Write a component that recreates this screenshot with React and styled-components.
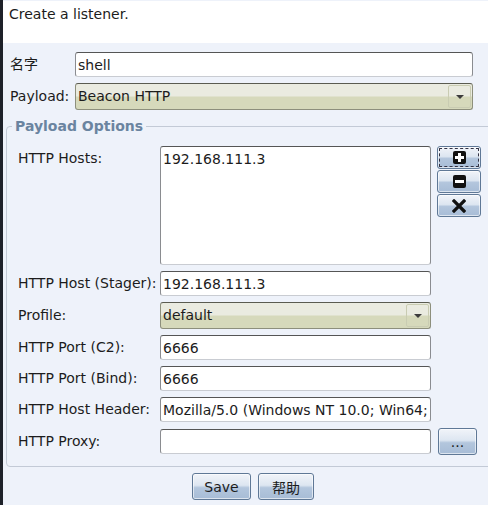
import React from 'react';
import styled, {createGlobalStyle} from 'styled-components';

const GlobalStyle = createGlobalStyle`
  html, body {
    margin: 0;
    padding: 0;
    overflow: hidden;
    background: #1e2129;
  }
  body {
    font-family: "DejaVu Sans", "Noto Sans CJK SC", sans-serif;
    font-size: 14px;
    color: #1c1c1c;
  }
`;

const ScWindow = styled.div`
  margin-left: 3px;
  width: 497px;
  height: 505px;
  background: #eef2fa;
  display: flex;
  flex-direction: column;
`;

const ScHeader = styled.div`
  height: 43px;
  box-sizing: border-box;
  background: #fff;
  border-top: 1px solid #eef2fa;
  padding: 5px 0 0 6px;
  line-height: 17px;
`;

const ScBody = styled.div`
  padding: 9px 0 0 3px;
  display: flex;
  flex-direction: column;
`;

const ScTopGrid = styled.div`
  display: grid;
  grid-template-columns: 65px 398px;
  row-gap: 6px;
  padding-left: 4px;
  align-items: center;
`;

const ScLabel = styled.label`
  line-height: 17px;
  white-space: nowrap;
  align-self: ${(p) => (p.$top ? 'start' : 'center')};
  padding-top: ${(p) => (p.$top ? '4px' : '0')};
`;

const ScInput = styled.input`
  box-sizing: border-box;
  height: 25px;
  width: 100%;
  margin: 0;
  padding: 0 2px;
  font: inherit;
  color: #1c1c1c;
  background: #fff;
  border: 1px solid #8a8c90;
  border-top-color: #555;
  border-bottom-color: #c9ccd2;
  border-radius: 3px;
  outline: none;
`;

const ScSelect = styled.div`
  box-sizing: border-box;
  height: 27px;
  width: 100%;
  display: flex;
  align-items: stretch;
  border: 1px solid #8d8f7c;
  border-top-color: #5a5b50;
  border-radius: 3px;
  background: linear-gradient(#eaebe0 0%, #eaebe0 48%, #d6d9bb 52%, #d6d9bb 100%);
  overflow: hidden;
`;

const ScSelectText = styled.span`
  flex: 1;
  padding-left: 2px;
  line-height: 25px;
`;

const ScSelectArrow = styled.span`
  width: 21px;
  margin: 1px 1px 1px 0;
  display: flex;
  align-items: center;
  justify-content: center;
  border: 1px solid #c9ccb2;
  border-radius: 2px;
  &::after {
    content: '';
    border-left: 4px solid transparent;
    border-right: 4px solid transparent;
    border-top: 4px solid #3c3c3c;
    margin-top: 1px;
  }
`;

const ScGroup = styled.fieldset`
  margin: 8px 0 0 0;
  padding: 12px 0 11px 11px;
  border: 1px solid #c3cad6;
  border-radius: 4px;
  min-width: 0;
`;

const ScLegend = styled.legend`
  margin-left: -6px;
  padding: 0 3px;
  line-height: 16px;
  font-weight: bold;
  color: #6a84a0;
`;

const ScGrid = styled.div`
  display: grid;
  grid-template-columns: 142px 271px auto;
  row-gap: 6px;
  align-items: center;
`;

const ScList = styled.div`
  box-sizing: border-box;
  height: 119px;
  background: #fff;
  border: 1px solid #8a8c90;
  border-top-color: #555;
  border-bottom-color: #c9ccd2;
  border-radius: 3px;
  padding: 4px 2px;
  line-height: 17px;
`;

const ScSide = styled.div`
  align-self: ${(p) => (p.$top ? 'start' : 'center')};
  padding-left: ${(p) => p.$pad || 6}px;
  display: flex;
  flex-direction: column;
  gap: 1px;
`;

const ScButton = styled.button`
  box-sizing: border-box;
  width: ${(p) => p.$w || 44}px;
  height: ${(p) => p.$h || 27}px;
  margin: 0;
  padding: 0;
  font-family: "DejaVu Sans", "Noto Sans CJK SC", sans-serif;
  font-size: 14px;
  color: #1c1c1c;
  display: flex;
  align-items: center;
  justify-content: center;
  border: 1px solid #5f7896;
  border-radius: 3px;
  background: linear-gradient(#f1f4f9 0%, #dde6f1 45%, #b3c6dd 55%, #a7bcd6 100%);
  box-shadow: inset 0 0 0 1px rgba(255, 255, 255, 0.6);
  outline: ${(p) => (p.$focus ? '1px dashed #334' : 'none')};
  outline-offset: -3px;
`;

const ScFooter = styled.div`
  display: flex;
  justify-content: center;
  gap: 7px;
  margin-top: 6px;
`;

const PlusIcon = () => (
  <svg width="13" height="13" viewBox="0 0 13 13">
    <rect x="0" y="0" width="13" height="13" rx="2" fill="#111" />
    <rect x="5" y="2" width="3" height="9" fill="#fff" />
    <rect x="2" y="5" width="9" height="3" fill="#fff" />
  </svg>
);

const MinusIcon = () => (
  <svg width="13" height="13" viewBox="0 0 13 13">
    <rect x="0" y="0" width="13" height="13" rx="2" fill="#111" />
    <rect x="2" y="5" width="9" height="3" fill="#fff" />
  </svg>
);

const CrossIcon = () => (
  <svg width="14" height="14" viewBox="0 0 14 14">
    <path d="M2 2 L12 12 M12 2 L2 12" stroke="#111" strokeWidth="3.2" strokeLinecap="square" />
  </svg>
);

const Field = ({value}) => <ScInput readOnly value={value} />;

const Select = ({value}) => (
  <ScSelect>
    <ScSelectText>{value}</ScSelectText>
    <ScSelectArrow />
  </ScSelect>
);

const App = () => {
  return (
    <ScWindow>
      <GlobalStyle />
      <ScHeader>Create a listener.</ScHeader>
      <ScBody>
        <ScTopGrid>
          <ScLabel>名字</ScLabel>
          <Field value="shell" />
          <ScLabel>Payload:</ScLabel>
          <Select value="Beacon HTTP" />
        </ScTopGrid>

        <ScGroup>
          <ScLegend>Payload Options</ScLegend>
          <ScGrid>
            <ScLabel $top>HTTP Hosts:</ScLabel>
            <ScList>192.168.111.3</ScList>
            <ScSide $top>
              <ScButton $h={23} $focus>
                <PlusIcon />
              </ScButton>
              <ScButton $h={23}>
                <MinusIcon />
              </ScButton>
              <ScButton $h={23}>
                <CrossIcon />
              </ScButton>
            </ScSide>

            <ScLabel>HTTP Host (Stager):</ScLabel>
            <Field value="192.168.111.3" />
            <span />

            <ScLabel>Profile:</ScLabel>
            <Select value="default" />
            <span />

            <ScLabel>HTTP Port (C2):</ScLabel>
            <Field value="6666" />
            <span />

            <ScLabel>HTTP Port (Bind):</ScLabel>
            <Field value="6666" />
            <span />

            <ScLabel>HTTP Host Header:</ScLabel>
            <Field value="Mozilla/5.0 (Windows NT 10.0; Win64; x64) AppleWebKit/537.36" />
            <span />

            <ScLabel>HTTP Proxy:</ScLabel>
            <Field value="" />
            <ScSide $pad={7}>
              <ScButton $w={39} $h={27}>
                ...
              </ScButton>
            </ScSide>
          </ScGrid>
        </ScGroup>

        <ScFooter>
          <ScButton $w={59}>Save</ScButton>
          <ScButton $w={56}>帮助</ScButton>
        </ScFooter>
      </ScBody>
    </ScWindow>
  );
};

export default App;
